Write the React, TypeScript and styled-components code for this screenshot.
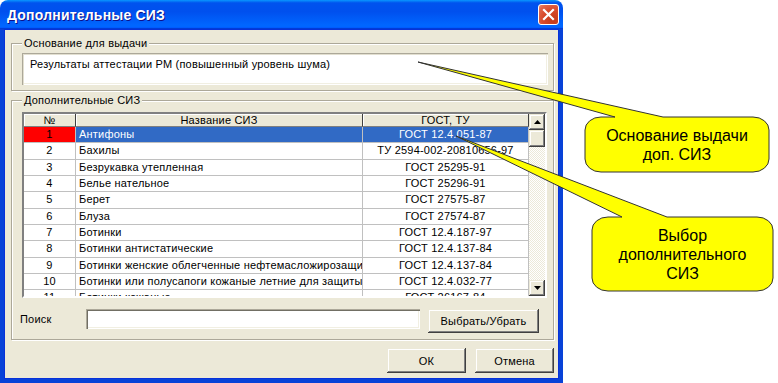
import React from "react";
import styled, { createGlobalStyle } from "styled-components";

const GlobalStyle = createGlobalStyle`
  html, body {
    margin: 0;
    padding: 0;
    background: #fff;
  }
  body {
    font-family: "Liberation Sans", Arial, sans-serif;
    font-size: 11px;
    color: #000;
  }
`;

type Item = [string, string, string];

const items: Item[] = [
  ["1", "Антифоны", "ГОСТ 12.4.051-87"],
  ["2", "Бахилы", "ТУ 2594-002-20810656-97"],
  ["3", "Безрукавка утепленная", "ГОСТ 25295-91"],
  ["4", "Белье нательное", "ГОСТ 25296-91"],
  ["5", "Берет", "ГОСТ 27575-87"],
  ["6", "Блуза", "ГОСТ 27574-87"],
  ["7", "Ботинки", "ГОСТ 12.4.187-97"],
  ["8", "Ботинки антистатические", "ГОСТ 12.4.137-84"],
  ["9", "Ботинки женские облегченные нефтемасложирозащитные", "ГОСТ 12.4.137-84"],
  ["10", "Ботинки или полусапоги кожаные летние для защиты от", "ГОСТ 12.4.032-77"],
  ["11", "Ботинки кожаные", "ГОСТ 26167-84"],
];

// rounded box with a wedge pointing from its top edge to (tx, ty)
const calloutPath = (
  x: number,
  y: number,
  w: number,
  h: number,
  b1: number,
  b2: number,
  tx: number,
  ty: number
) => {
  const rx = 16;
  const ry = 13;
  return `M${x + rx},${y} L${b1},${y} L${tx},${ty} L${b2},${y} L${x + w - rx},${y}
    A${rx},${ry} 0 0 1 ${x + w},${y + ry} L${x + w},${y + h - ry}
    A${rx},${ry} 0 0 1 ${x + w - rx},${y + h} L${x + rx},${y + h}
    A${rx},${ry} 0 0 1 ${x},${y + h - ry} L${x},${y + ry}
    A${rx},${ry} 0 0 1 ${x + rx},${y} Z`;
};

const App: React.FC = () => {
  return (
    <Page>
      <GlobalStyle />
      <Window>
        <TitleBar>
          <Title>Дополнительные СИЗ</Title>
          <CloseButton>
            <svg width="13" height="13" viewBox="0 0 13 13">
              <path d="M2 2 L11 11 M11 2 L2 11" stroke="#fff" strokeWidth="2.2" strokeLinecap="square" />
            </svg>
          </CloseButton>
        </TitleBar>
        <Body>
          <GroupBox>
            <Legend>Основание для выдачи</Legend>
            <ReasonBox>Результаты аттестации РМ (повышенный уровень шума)</ReasonBox>
          </GroupBox>
          <GroupBox $gap={3} $pad="5px 6px 6px 10px">
            <Legend>Дополнительные СИЗ</Legend>
            <Grid>
              <TableArea>
                <HeaderRow>
                  <HeaderCell>№</HeaderCell>
                  <HeaderCell>Название СИЗ</HeaderCell>
                  <HeaderCell>ГОСТ, ТУ</HeaderCell>
                </HeaderRow>
                <Rows>
                  {items.map(([num, name, gost], i) => (
                    <Row key={num}>
                      <Cell $align="center" $mark={i === 0}>
                        {num}
                      </Cell>
                      <Cell $selected={i === 0}>{name}</Cell>
                      <Cell $align="center" $selected={i === 0}>
                        {gost}
                      </Cell>
                    </Row>
                  ))}
                </Rows>
              </TableArea>
              <ScrollBar>
                <ScrollButton>
                  <svg width="7" height="4" viewBox="0 0 7 4">
                    <path d="M3.5 0 L7 4 L0 4 Z" fill="#000" />
                  </svg>
                </ScrollButton>
                <ScrollThumb />
                <ScrollTrack />
                <ScrollButton>
                  <svg width="7" height="4" viewBox="0 0 7 4">
                    <path d="M0 0 L7 0 L3.5 4 Z" fill="#000" />
                  </svg>
                </ScrollButton>
              </ScrollBar>
            </Grid>
            <SearchRow>
              <SearchLabel>Поиск</SearchLabel>
              <SearchInput />
              <Button $width={111} $height={24}>
                Выбрать/Убрать
              </Button>
            </SearchRow>
          </GroupBox>
          <Footer>
            <Button $width={79} $height={25}>
              ОК
            </Button>
            <Button $width={79} $height={25}>
              Отмена
            </Button>
          </Footer>
        </Body>
      </Window>

      <CalloutShapes width="778" height="383" viewBox="0 0 778 383">
        <path
          d={calloutPath(585, 117, 184, 55, 615, 663, 418, 62)}
          fill="#ffff00"
          stroke="#333"
          strokeWidth="1"
        />
        <path
          d={calloutPath(592, 217, 181, 74, 622, 667, 456, 136)}
          fill="#ffff00"
          stroke="#333"
          strokeWidth="1"
        />
      </CalloutShapes>
      <CalloutText $x={585} $y={117} $w={184} $h={55}>
        Основание выдачи
        <br />
        доп. СИЗ
      </CalloutText>
      <CalloutText $x={592} $y={217} $w={181} $h={74}>
        Выбор
        <br />
        дополнительного
        <br />
        СИЗ
      </CalloutText>
    </Page>
  );
};

export default App;

const Page = styled.div`
  position: relative;
  width: 778px;
  height: 383px;
  overflow: hidden;
  background: #fff;
`;

const Window = styled.div`
  width: 563px;
  height: 383px;
  display: flex;
  flex-direction: column;
  box-sizing: border-box;
  letter-spacing: 0.2px;
`;

const TitleBar = styled.div`
  height: 29px;
  flex: none;
  display: flex;
  align-items: center;
  justify-content: space-between;
  padding: 0 4px 0 7px;
  box-sizing: border-box;
  border-radius: 8px 8px 0 0;
  background: linear-gradient(
    to bottom,
    #0997ff 0%,
    #0053ee 10%,
    #0050ee 40%,
    #0066ff 86%,
    #0066ff 92%,
    #005bff 95%,
    #003dd7 97%,
    #003dd7 100%
  );
`;

const Title = styled.div`
  color: #fff;
  font-weight: 700;
  font-size: 14px;
  letter-spacing: 0.2px;
  text-shadow: 1px 1px #0f1089;
`;

const CloseButton = styled.div`
  width: 21px;
  height: 21px;
  box-sizing: border-box;
  border: 1px solid #fff;
  border-radius: 3px;
  display: flex;
  align-items: center;
  justify-content: center;
  background: radial-gradient(circle at 75% 80%, #c23a1a 0%, #d7492a 50%, #e0654a 80%, #ea8a70 100%);
`;

const Body = styled.div`
  flex: 1;
  display: flex;
  flex-direction: column;
  background: #ece9d8;
  padding: 8px 5px 0 7px;
  border-style: solid;
  border-color: #0842d8;
  border-width: 0 4px 4px 4px;
  box-shadow: inset 0 0 0 1px #0831d9;
  box-sizing: border-box;
`;

const GroupBox = styled.fieldset<{ $gap?: number; $pad?: string }>`
  margin: ${(p) => p.$gap ?? 0}px 0 0 0;
  padding: ${(p) => p.$pad ?? "3px 5px 5px 10px"};
  border: 1px solid #aca899;
  box-shadow: inset 1px 1px #fff, 1px 1px #fff;
  min-width: 0;
`;

const Legend = styled.legend`
  padding: 0 2px;
  margin-left: 0;
  line-height: 13px;
  font-size: 11px;
  background: #ece9d8;
`;

const ReasonBox = styled.div`
  height: 32px;
  box-sizing: border-box;
  background: #fff;
  padding: 5px 8px 0;
  line-height: 13px;
  box-shadow: inset 1px 1px #aca899, inset 2px 2px #e2dfd0, inset -1px -1px #fff, inset -2px -2px #f1efe2;
`;

const Grid = styled.div`
  height: 186px;
  box-sizing: border-box;
  display: flex;
  background: #fff;
  border-style: solid;
  border-width: 2px;
  border-color: #808080 #fff #fff #808080;
  box-shadow: inset 1px 1px #404040, inset -1px -1px #d4d0c8;
  overflow: hidden;
`;

const TableArea = styled.div`
  flex: 1;
  display: flex;
  flex-direction: column;
  min-width: 0;
  overflow: hidden;
`;

const columns = "52px 287px 166px";

const HeaderRow = styled.div`
  display: grid;
  grid-template-columns: ${columns};
  height: 13px;
  flex: none;
`;

const HeaderCell = styled.div`
  background: #ece9d8;
  box-sizing: border-box;
  border-right: 1px solid #404040;
  border-bottom: 1px solid #808080;
  box-shadow: inset 1px 1px #fff;
  text-align: center;
  line-height: 12px;
  white-space: nowrap;
  overflow: hidden;
`;

const Rows = styled.div`
  flex: 1;
  overflow: hidden;
`;

const Row = styled.div`
  display: grid;
  grid-template-columns: ${columns};
  height: 16.33px;
`;

const Cell = styled.div<{ $align?: string; $selected?: boolean; $mark?: boolean }>`
  box-sizing: border-box;
  border-right: 1px solid #c0c0c0;
  border-bottom: 1px solid #c0c0c0;
  padding: 0 3px;
  line-height: 15px;
  white-space: nowrap;
  overflow: hidden;
  text-align: ${(p) => p.$align ?? "left"};
  background: ${(p) => (p.$mark ? "#ff0000" : p.$selected ? "#316ac5" : "#fff")};
  color: ${(p) => (p.$selected ? "#fff" : "#000")};
`;

const ScrollBar = styled.div`
  width: 16px;
  flex: none;
  display: flex;
  flex-direction: column;
`;

const raised = `
  background: #ece9d8;
  box-sizing: border-box;
  box-shadow: inset -1px -1px #404040, inset 1px 1px #ece9d8, inset -2px -2px #808080, inset 2px 2px #fff;
`;

const ScrollButton = styled.div`
  ${raised}
  height: 16px;
  flex: none;
  display: flex;
  align-items: center;
  justify-content: center;
`;

const ScrollThumb = styled.div`
  ${raised}
  height: 17px;
  flex: none;
`;

const ScrollTrack = styled.div`
  flex: 1;
  background: repeating-conic-gradient(#fff 0 25%, #ece9d8 0 50%) 0 0 / 2px 2px;
`;

const SearchRow = styled.div`
  display: flex;
  align-items: flex-start;
  margin: 11px 0 0 -2px;
`;

const SearchLabel = styled.div`
  width: 66px;
  line-height: 20px;
`;

const SearchInput = styled.div`
  width: 334px;
  height: 20px;
  box-sizing: border-box;
  background: #fff;
  box-shadow: inset 1px 1px #aca899, inset 2px 2px #716f64, inset -1px -1px #fff, inset -2px -2px #f1efe2;
  margin-right: 8px;
`;

const Button = styled.div<{ $width: number; $height: number }>`
  ${raised}
  width: ${(p) => p.$width}px;
  height: ${(p) => p.$height}px;
  display: flex;
  align-items: center;
  justify-content: center;
`;

const Footer = styled.div`
  display: flex;
  justify-content: flex-end;
  gap: 9px;
  margin-top: 8px;
`;

const CalloutShapes = styled.svg`
  position: absolute;
  left: 0;
  top: 0;
  pointer-events: none;
`;

const CalloutText = styled.div<{ $x: number; $y: number; $w: number; $h: number }>`
  position: absolute;
  left: ${(p) => p.$x}px;
  top: ${(p) => p.$y}px;
  width: ${(p) => p.$w}px;
  height: ${(p) => p.$h}px;
  display: flex;
  align-items: center;
  justify-content: center;
  text-align: center;
  font-size: 16px;
  line-height: 19px;
  color: #000;
`;
